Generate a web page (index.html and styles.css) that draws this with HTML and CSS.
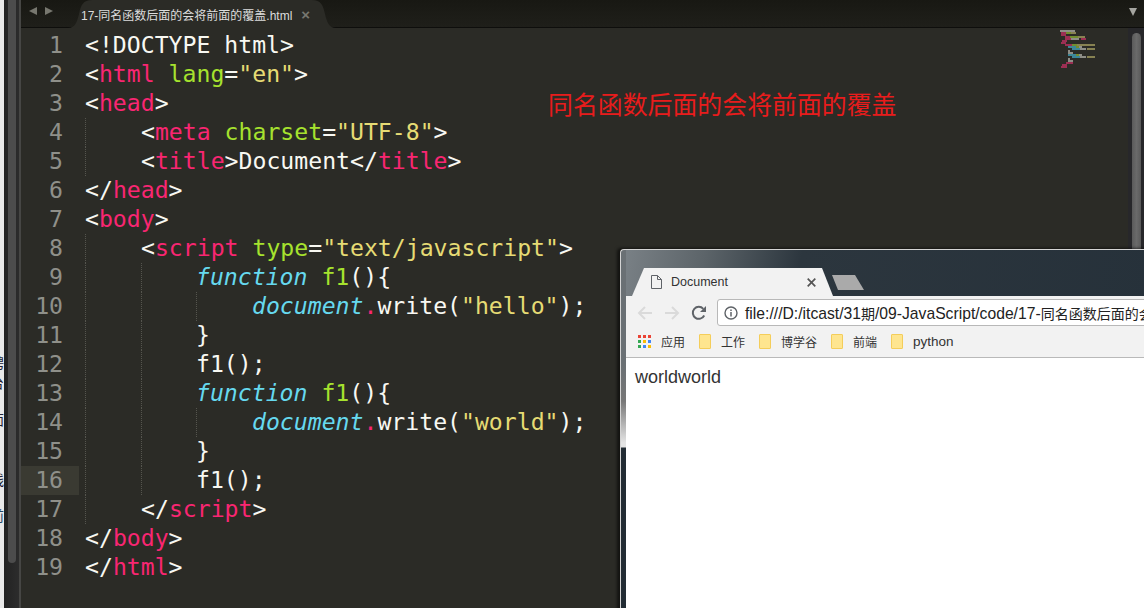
FILE: index.html
```html
<!DOCTYPE html>
<html lang="zh">
<head>
<meta charset="utf-8">
<title>17-同名函数后面的会将前面的覆盖.html</title>
<link rel="stylesheet" href="styles.css">
</head>
<body>
<div class="desktop">
  <aside class="behind">
    <div class="behind-text">
      <span class="frag frag-1">聘</span>
      <span class="frag frag-2">台</span>
      <span class="frag frag-3">面</span>
      <span class="frag frag-4">线</span>
      <span class="frag frag-5">前</span>
    </div>
    <div class="outer-scroll"><div class="outer-thumb"></div></div>
  </aside>
  <main class="editor">
    <header class="tabbar">
      <div class="arrows"><span class="arrow-l"></span><span class="arrow-r"></span></div>
      <div class="tab"><span class="tab-name">17-同名函数后面的会将前面的覆盖.html</span><span class="tab-x">×</span></div>
      <span class="menu-arrow"></span>
    </header>
    <div class="body">
      <div class="gutter">
        <div class="num">1</div><div class="num">2</div><div class="num">3</div><div class="num">4</div><div class="num">5</div><div class="num">6</div><div class="num">7</div><div class="num">8</div><div class="num">9</div><div class="num">10</div><div class="num">11</div><div class="num">12</div><div class="num">13</div><div class="num">14</div><div class="num">15</div><div class="num cur">16</div><div class="num">17</div><div class="num">18</div><div class="num">19</div>
      </div>
      <div class="code">
        <div class="ln">&lt;!DOCTYPE html&gt;</div>
        <div class="ln">&lt;<b>html</b> <i>lang</i>=<u>"en"</u>&gt;</div>
        <div class="ln">&lt;<b>head</b>&gt;</div>
        <div class="ln ind1">&lt;<b>meta</b> <i>charset</i>=<u>"UTF-8"</u>&gt;</div>
        <div class="ln ind1">&lt;<b>title</b>&gt;Document&lt;/<b>title</b>&gt;</div>
        <div class="ln">&lt;/<b>head</b>&gt;</div>
        <div class="ln">&lt;<b>body</b>&gt;</div>
        <div class="ln ind1">&lt;<b>script</b> <i>type</i>=<u>"text/javascript"</u>&gt;</div>
        <div class="ln ind2"><em>function</em> <s>f1</s>(){</div>
        <div class="ln ind3"><em>document</em><b>.</b>write(<u>"hello"</u>);</div>
        <div class="ln ind2">}</div>
        <div class="ln ind2">f1();</div>
        <div class="ln ind2"><em>function</em> <s>f1</s>(){</div>
        <div class="ln ind3"><em>document</em><b>.</b>write(<u>"world"</u>);</div>
        <div class="ln ind2">}</div>
        <div class="ln ind2">f1();</div>
        <div class="ln ind1">&lt;/<b>script</b>&gt;</div>
        <div class="ln">&lt;/<b>body</b>&gt;</div>
        <div class="ln">&lt;/<b>html</b>&gt;</div>
      </div>
      <div class="note">同名函数后面的会将前面的覆盖</div>
      <svg class="minimap" viewBox="0 0 36 38" width="36" height="38" aria-hidden="true">
        <g fill="#a0a098"><rect x="0" y="0" width="15" height="2"/><rect x="11" y="8" width="8" height="2"/><rect x="19" y="16" width="3" height="2"/><rect x="20" y="18" width="6" height="2"/><rect x="8" y="20" width="2" height="2"/><rect x="8" y="22" width="5" height="2"/><rect x="19" y="24" width="3" height="2"/><rect x="20" y="26" width="6" height="2"/><rect x="8" y="28" width="2" height="2"/><rect x="8" y="30" width="5" height="2"/></g>
        <g fill="#b0305c"><rect x="1" y="2" width="5" height="2"/><rect x="1" y="4" width="5" height="2"/><rect x="5" y="6" width="5" height="2"/><rect x="5" y="8" width="6" height="2"/><rect x="21" y="8" width="5" height="2"/><rect x="2" y="10" width="5" height="2"/><rect x="1" y="12" width="5" height="2"/><rect x="5" y="14" width="7" height="2"/><rect x="6" y="32" width="7" height="2"/><rect x="2" y="34" width="5" height="2"/><rect x="1" y="36" width="6" height="2"/></g>
        <g fill="#7f9f30"><rect x="6" y="2" width="5" height="2"/><rect x="10" y="6" width="8" height="2"/><rect x="12" y="14" width="5" height="2"/><rect x="16" y="16" width="3" height="2"/><rect x="16" y="24" width="3" height="2"/></g>
        <g fill="#98925a"><rect x="11" y="2" width="5" height="2"/><rect x="18" y="6" width="7" height="2"/><rect x="17" y="14" width="18" height="2"/><rect x="27" y="18" width="8" height="2"/><rect x="27" y="26" width="8" height="2"/></g>
        <g fill="#3f98ad"><rect x="8" y="16" width="8" height="2"/><rect x="12" y="18" width="8" height="2"/><rect x="8" y="24" width="8" height="2"/><rect x="12" y="26" width="8" height="2"/></g>
      </svg>
      <div class="scroll"><div class="thumb"></div></div>
    </div>
  </main>

  <section class="browser">
    <div class="b-tabs">
      <div class="b-tab">
        <svg class="b-doc" viewBox="0 0 11 14" width="11" height="14" aria-hidden="true"><path d="M.5.5h6l4 4v9H.5zM6.5.5v4h4" fill="none" stroke="#5f6368"/></svg>
        <span class="b-title">Document</span>
        <svg class="b-x" viewBox="0 0 9 9" width="9" height="9" aria-hidden="true"><path d="M.7.7l7.6 7.6M8.3.7.7 8.3" stroke="#555" stroke-width="1.7"/></svg>
      </div>
      <div class="b-newtab"></div>
    </div>
    <div class="b-chrome">
      <div class="b-nav">
        <svg class="nav-ic" viewBox="0 0 16 16" width="16" height="16" aria-hidden="true"><path d="M15 8H2M8 2 2 8l6 6" fill="none" stroke="#dadada" stroke-width="2"/></svg>
        <svg class="nav-ic" viewBox="0 0 16 16" width="16" height="16" aria-hidden="true"><path d="M1 8h13M8 2l6 6-6 6" fill="none" stroke="#dadada" stroke-width="2"/></svg>
        <svg class="nav-ic" viewBox="0 0 16 16" width="16" height="16" aria-hidden="true"><path d="M13.2 10.5A6 6 0 1 1 12.3 3.8" fill="none" stroke="#5f6368" stroke-width="2"/><path d="M15 1v6H9z" fill="#5f6368"/></svg>
        <div class="omni">
          <svg class="info" viewBox="0 0 14 14" width="14" height="14" aria-hidden="true"><circle cx="7" cy="7" r="6" fill="none" stroke="#5f6368" stroke-width="1.4"/><path d="M7 6v4.5M7 3.4v1.5" stroke="#5f6368" stroke-width="1.5"/></svg>
          <span class="url">file:///D:/itcast/31<span class="cjk">期</span>/09-JavaScript/code/17-<span class="cjk">同名函数后面的会将前面的覆盖</span>.html</span>
        </div>
      </div>
      <div class="b-marks">
        <span class="mark first">
          <svg viewBox="0 0 13 13" width="13" height="13" aria-hidden="true">
            <rect width="3" height="3" fill="#ea4335"/><rect x="5" width="3" height="3" fill="#ea4335"/><rect x="10" width="3" height="3" fill="#ea4335"/>
            <rect y="5" width="3" height="3" fill="#34a853"/><rect x="5" y="5" width="3" height="3" fill="#fbbc05"/><rect x="10" y="5" width="3" height="3" fill="#4285f4"/>
            <rect y="10" width="3" height="3" fill="#34a853"/><rect x="5" y="10" width="3" height="3" fill="#4285f4"/><rect x="10" y="10" width="3" height="3" fill="#fbbc05"/>
          </svg>
          应用</span>
        <span class="mark"><i class="folder"></i>工作</span>
        <span class="mark"><i class="folder"></i>博学谷</span>
        <span class="mark"><i class="folder"></i>前端</span>
        <span class="mark latin"><i class="folder"></i>python</span>
      </div>
    </div>
    <div class="b-page">worldworld</div>
  </section>
</div>
</body>
</html>
```
FILE: styles.css
```css
* { box-sizing: border-box; }
html, body { margin: 0; height: 100%; overflow: hidden; }
.desktop { position: relative; display: flex; width: 1144px; height: 608px; overflow: hidden; background: #2b2b26; }

.behind { display: flex; width: 21px; flex: none; background: #2a2a2a; border-right: 2px solid #464644; }
.behind-text { width: 4px; flex: none; background: #e9e9e9; position: relative; overflow: hidden; font: 14px "Noto Sans CJK SC", sans-serif; color: #223; }
.frag { position: absolute; right: 0; line-height: 14px; }
.frag-1 { top: 355px; }
.frag-2 { top: 375px; }
.frag-3 { top: 412px; }
.frag-4 { top: 472px; }
.frag-5 { top: 508px; color: #246; }
.outer-scroll { flex: 1; padding: 0 3px 0 4px; background: linear-gradient(90deg, #222, #2c2c2c); }
.outer-thumb { height: 563px; border-radius: 0 0 5px 5px; background: #4c4c4c; }

.editor { flex: 1; display: flex; flex-direction: column; min-width: 0; }
.tabbar { position: relative; flex: none; height: 28px; display: flex; background: linear-gradient(#181813, #1f1f1a); border-bottom: 1px solid #0e0e0c; }
.arrows { width: 47px; display: flex; gap: 8px; padding: 7px 0 0 8px; flex: none; }
.arrow-l, .arrow-r { width: 0; height: 0; border: 4.5px solid transparent; }
.arrow-l { border-right: 8px solid #77776f; border-left: 0; }
.arrow-r { border-left: 8px solid #77776f; border-right: 0; }
.tab { display: flex; align-items: center; width: 268px; height: 28px; padding: 1px 0 0 13px; background: #2b2b26; clip-path: path("M0 28C7 28 9 22 11 14C13 5 15 0 24 0H244C253 0 255 5 257 14C259 22 261 28 268 28Z"); }
.tab-name { font: 12px "Liberation Sans", "Noto Sans CJK SC", sans-serif; color: #ddd; white-space: nowrap; }
.tab-x { margin-left: 9px; font: bold 15px "Liberation Sans", sans-serif; color: #77776f; }
.menu-arrow { position: absolute; right: 7px; top: 8px; width: 0; height: 0; border: 4.5px solid transparent; border-top: 8px solid #a5a5a0; border-bottom: 0; }

.body { position: relative; flex: 1; display: flex; min-height: 0; padding-top: 3px; }
.gutter { width: 58px; flex: none; }
.num { height: 29px; padding-right: 16px; text-align: right; font: 23.15px/29px "DejaVu Sans Mono", monospace; color: #8f908a; }
.num.cur { background: #3a3a32; }
.code { flex: 1; padding-left: 6px; min-width: 0; }
.ln { height: 29px; font: 23.15px/29px "DejaVu Sans Mono", monospace; color: #f8f8f2; white-space: pre; }
.ln b { font-weight: normal; color: #f92672; }
.ln i { font-style: normal; color: #a6e22e; }
.ln u { text-decoration: none; color: #e6db74; }
.ln em { font-style: italic; color: #66d9ef; }
.ln s { text-decoration: none; color: #a6e22e; }
.ind1, .ind2, .ind3 { background-image: linear-gradient(#55554e 50%, transparent 50%), linear-gradient(#55554e 50%, transparent 50%), linear-gradient(#55554e 50%, transparent 50%); background-size: 1px 2px; background-repeat: repeat-y; }
.ind1 { padding-left: 56px; background-image: linear-gradient(#55554e 50%, transparent 50%); background-position: 0 0; }
.ind2 { padding-left: 111px; background-image: linear-gradient(#55554e 50%, transparent 50%), linear-gradient(#55554e 50%, transparent 50%); background-position: 0 0, 56px 0; }
.ind3 { padding-left: 167px; background-position: 0 0, 56px 0, 111px 0; }

.note { position: absolute; left: 527px; top: 60px; font: 24.9px/30px "Noto Sans CJK SC", sans-serif; color: #e81c1c; white-space: nowrap; }
.minimap { position: absolute; left: 1039px; top: 2px; opacity: .85; filter: blur(.3px); }
.scroll { position: absolute; right: 0; top: 0; bottom: 0; width: 16px; background: #27272a; padding: 5px 3px 0 4px; }
.thumb { height: 590px; border-radius: 5px; background: linear-gradient(90deg, #5a5a5a, #6a6a6a, #5a5a5a); }

.browser { position: absolute; left: 620px; top: 249px; width: 540px; height: 380px; display: flex; flex-direction: column; background: linear-gradient(#6a7074 0, #6a7074 30%, #777 40%, #e4e4e4 51%, #e4e4e4 52%, #222c34 52.5%, #222c34 100%) left top / 5px 100% no-repeat, linear-gradient(100deg, #7b8287 0, #5c6469 14%, #2c363e 30%, #26313a 90%, #333f4a 96%); border: 1px solid #d4d4d4; border-right: 0; border-radius: 4px 0 0 0; box-shadow: -3px -1px 3px rgba(0, 0, 0, .55); padding-left: 5px; }
.b-tabs { flex: none; height: 46px; display: flex; align-items: flex-end; }
.b-tab { position: relative; width: 201px; height: 28px; margin-left: 6px; display: flex; align-items: center; padding-left: 19px; background: #f2f2f2; clip-path: polygon(0 100%, 12px 0, 190px 0, 201px 100%); }
.b-doc { flex: none; }
.b-title { margin-left: 9px; font: 12.5px "Liberation Sans", sans-serif; color: #333; }
.b-x { position: absolute; left: 175px; top: 10px; }
.b-newtab { width: 32px; height: 15px; margin: 0 0 6px -1px; background: #aaa; clip-path: polygon(0 0, 23px 0, 32px 100%, 6px 100%); }

.b-chrome { flex: none; height: 62px; background: #f2f2f2; border-bottom: 1px solid #b9b9b9; }
.b-nav { height: 33px; display: flex; align-items: center; padding-left: 11px; gap: 11px; }
.nav-ic { flex: none; }
.omni { display: flex; align-items: center; flex: none; width: 440px; height: 27px; margin-left: -1px; padding-left: 6px; background: #fff; border: 1px solid #b8b8b8; border-radius: 3px 0 0 3px; overflow: hidden; }
.info { flex: none; }
.url { margin-left: 7px; font: 15.7px "Liberation Sans", "Noto Sans CJK SC", sans-serif; color: #222; white-space: nowrap; }
.cjk { font-size: 14px; }
.b-marks { height: 27px; display: flex; align-items: center; padding: 0 0 2px 12px; gap: 14px; font: 12px "Liberation Sans", "Noto Sans CJK SC", sans-serif; color: #333; }
.mark { display: flex; align-items: center; gap: 10px; }
.mark.latin { font-size: 13.5px; }
.folder { width: 12px; height: 15px; background: #fee58f; border: 1px solid #f4cd5a; border-radius: 1px; }
.b-page { flex: 1; background: #fff; padding: 9px 0 0 9px; font: 18px/20px "Liberation Sans", sans-serif; color: #333; }
```
